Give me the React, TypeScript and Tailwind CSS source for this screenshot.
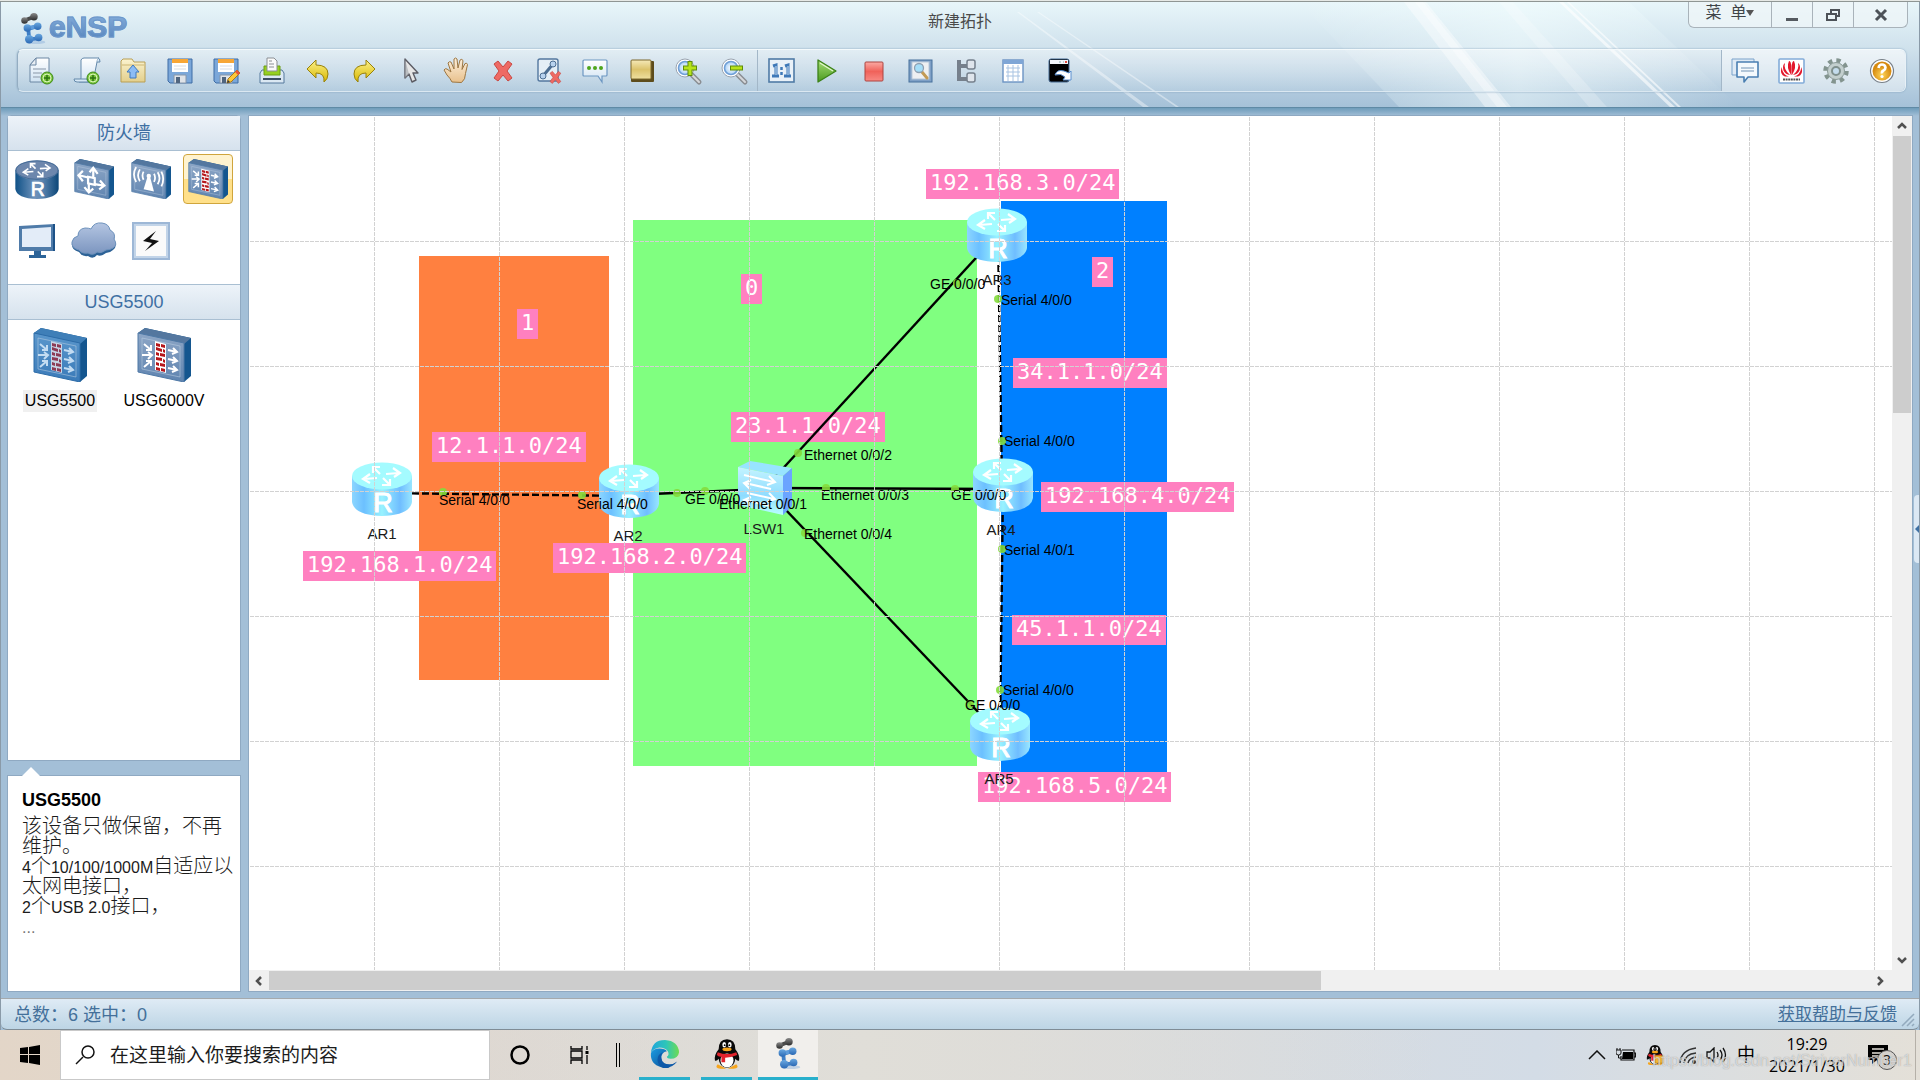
import React from "react";

type P = { className?: string };

const cx = (...c: (string | undefined | false)[]) => c.filter(Boolean).join(" ");

/* ---------- shared gradients ---------- */

function Defs() {
  return (
    <svg width="0" height="0" className="absolute" aria-hidden="true">
      <defs>
        <linearGradient id="steel" x1="0" y1="0" x2="0" y2="1">
          <stop offset="0" stopColor="#8da6c6" />
          <stop offset="1" stopColor="#5f84b0" />
        </linearGradient>
        <linearGradient id="steelSel" x1="0" y1="0" x2="0" y2="1">
          <stop offset="0" stopColor="#5b97cc" />
          <stop offset="1" stopColor="#3a7ab8" />
        </linearGradient>
        <linearGradient id="cylDark" x1="0" y1="0" x2="1" y2="0">
          <stop offset="0" stopColor="#0f5187" />
          <stop offset="0.45" stopColor="#6f93bb" />
          <stop offset="0.6" stopColor="#6189b3" />
          <stop offset="1" stopColor="#0b4678" />
        </linearGradient>
        <linearGradient id="cylLight" x1="0" y1="0" x2="1" y2="0">
          <stop offset="0" stopColor="#8cd6ff" />
          <stop offset="0.2" stopColor="#6cc0ff" />
          <stop offset="0.5" stopColor="#98f2ff" />
          <stop offset="0.8" stopColor="#6fbdff" />
          <stop offset="1" stopColor="#98e6ff" />
        </linearGradient>
        <linearGradient id="swLight" x1="0" y1="0" x2="0" y2="1">
          <stop offset="0" stopColor="#c4f4ff" />
          <stop offset="0.6" stopColor="#8fdcff" />
          <stop offset="1" stopColor="#b8ffff" />
        </linearGradient>
        <linearGradient id="cloudFill" x1="0" y1="0" x2="0" y2="1">
          <stop offset="0" stopColor="#b4c5e2" />
          <stop offset="1" stopColor="#7b95bf" />
        </linearGradient>
        <linearGradient id="gold" x1="0" y1="0" x2="0" y2="1">
          <stop offset="0" stopColor="#fbf08a" />
          <stop offset="1" stopColor="#d9b800" />
        </linearGradient>
        <linearGradient id="playG" x1="0" y1="0" x2="0" y2="1">
          <stop offset="0" stopColor="#a5dd75" />
          <stop offset="1" stopColor="#4a9a1e" />
        </linearGradient>
        <linearGradient id="stopG" x1="0" y1="0" x2="0" y2="1">
          <stop offset="0" stopColor="#fbaaa4" />
          <stop offset="0.5" stopColor="#f0625a" />
          <stop offset="1" stopColor="#f88a84" />
        </linearGradient>
        <linearGradient id="noteG" x1="0" y1="0" x2="0" y2="1">
          <stop offset="0" stopColor="#f5e9b8" />
          <stop offset="0.5" stopColor="#dcc36c" />
          <stop offset="1" stopColor="#efe0a0" />
        </linearGradient>
        <linearGradient id="folderG" x1="0" y1="0" x2="0" y2="1">
          <stop offset="0" stopColor="#fbf3cf" />
          <stop offset="1" stopColor="#e3cf8c" />
        </linearGradient>
        <linearGradient id="paperG" x1="0" y1="0" x2="0" y2="1">
          <stop offset="0" stopColor="#ffffff" />
          <stop offset="1" stopColor="#cfe2f2" />
        </linearGradient>
        <radialGradient id="lens">
          <stop offset="0" stopColor="#ffffff" />
          <stop offset="1" stopColor="#a9d0f5" />
        </radialGradient>
        <radialGradient id="helpG" cx="0.5" cy="0.7">
          <stop offset="0" stopColor="#ffd65a" />
          <stop offset="1" stopColor="#d68a10" />
        </radialGradient>
        <linearGradient id="handG" x1="0" y1="0" x2="0" y2="1">
          <stop offset="0" stopColor="#fdf0dc" />
          <stop offset="1" stopColor="#e8c08c" />
        </linearGradient>
        <linearGradient id="beadBlue" x1="0" y1="0" x2="0" y2="1">
          <stop offset="0" stopColor="#6aa8e0" />
          <stop offset="1" stopColor="#2a68b4" />
        </linearGradient>
        <linearGradient id="beadDark" x1="0" y1="0" x2="0" y2="1">
          <stop offset="0" stopColor="#8a8a8a" />
          <stop offset="1" stopColor="#2a2a2a" />
        </linearGradient>
        <linearGradient id="edgeTop" x1="0" y1="0" x2="1" y2="0">
          <stop offset="0" stopColor="#1fa5dc" />
          <stop offset="0.55" stopColor="#2ec6b8" />
          <stop offset="1" stopColor="#6fdb52" />
        </linearGradient>
        <linearGradient id="edgeBody" x1="0" y1="0" x2="1" y2="1">
          <stop offset="0" stopColor="#1b9de2" />
          <stop offset="1" stopColor="#0c4a94" />
        </linearGradient>
        <linearGradient id="glow" x1="0" y1="0" x2="1" y2="0">
          <stop offset="0" stopColor="#f4ffff" stopOpacity="0" />
          <stop offset="0.5" stopColor="#f4ffff" stopOpacity="0.5" />
          <stop offset="1" stopColor="#f4ffff" stopOpacity="0" />
        </linearGradient>
      </defs>
    </svg>
  );
}

const Icon = ({ children, className }: P & { children: React.ReactNode }) => (
  <svg viewBox="0 0 28 28" className={cx("size-7 overflow-visible", className)} aria-hidden="true">
    {children}
  </svg>
);

const PlusBadge = () => (
  <g>
    <circle cx="20" cy="21" r="6" fill="#7cc63c" stroke="#3d8a1a" />
    <circle cx="20" cy="21" r="4" fill="none" stroke="#d9f3bd" strokeWidth="1" />
    <path d="M20 18v6M17 21h6" stroke="#2d7410" strokeWidth="1.5" />
  </g>
);

/* ---------- toolbar icons ---------- */

const NewTopo = () => (
  <Icon>
    <path d="M9 1h13v24H3V8z" fill="url(#paperG)" stroke="#6b86a3" />
    <path d="M9 1v7H3z" fill="#e8eef4" stroke="#6b86a3" />
    <path d="M6 12h13M6 16h9M6 20h7" stroke="#a7b4c2" strokeWidth="1.6" />
    <PlusBadge />
  </Icon>
);
const NewPaper = () => (
  <Icon>
    <path d="M8 3q1-2 3-2h15q-2 1-2 4L20 25H6q2-1 2-4z" fill="url(#paperG)" stroke="#6489ab" />
    <path d="M24 5h3q0-4-2-4M1 22h13q0 3 2 3H4q-3 0-3-3z" fill="#d7e8f5" stroke="#6489ab" />
    <PlusBadge />
  </Icon>
);
const OpenIcon = () => (
  <Icon>
    <path d="M2 25V4l2-2h9l2 3h11v20z" fill="url(#folderG)" stroke="#b99f55" />
    <path d="M3 8h22" stroke="#cdb774" />
    <path d="M14 8l6 7h-3v6h-6v-6H8z" fill="#8cbcf5" stroke="#3e78bd" />
  </Icon>
);
const Floppy = () => (
  <>
    <path d="M2 2h24v24H4l-2-2z" fill="#7ba7d9" stroke="#3f6ca5" />
    <path d="M6 2h16v13H6z" fill="#fff" />
    <path d="M6 2h16v4H6z" fill="#f7a636" />
    <path d="M8 9h12M8 12h12" stroke="#d8dde4" />
    <path d="M8 18h12v8H8z" fill="#dfe3e8" stroke="#8696aa" />
    <path d="M10 20h4v6h-4z" fill="#50657f" />
  </>
);
const SaveIcon = () => (
  <Icon>
    <Floppy />
  </Icon>
);
const SaveAsIcon = () => (
  <Icon>
    <Floppy />
    <path d="M15 26l1-4 9-9 3 3-9 9z" fill="#fcc83a" stroke="#a8781c" />
    <path d="M23 15l2-2 3 3-2 2z" fill="#e7523c" />
    <path d="M15 26l1-3 2 2z" fill="#3a3a3a" />
  </Icon>
);
const PrintIcon = () => (
  <Icon>
    <path d="M4 13h20l2 3v10H2V16z" fill="#dbe8f3" stroke="#55789c" />
    <path d="M6 9h16v9H6z" fill="#96d01f" stroke="#6d9e12" />
    <path d="M9 1h7l3 3v10H9z" fill="#fafafa" stroke="#8b8f94" />
    <path d="M11 4h3M11 7h5M11 10h5" stroke="#8b8f94" />
    <path d="M5 21h18v2H5z" fill="#3c4e62" />
  </Icon>
);
const UndoIcon = () => (
  <Icon>
    <path d="M3 12L12 3v5q12 0 12 9 0 5-4 8 1-9-8-9v5z" fill="url(#gold)" stroke="#98820c" strokeLinejoin="round" />
  </Icon>
);
const RedoIcon = () => (
  <Icon>
    <path d="M25 12L16 3v5Q4 8 4 17q0 5 4 8-1-9 8-9v5z" fill="url(#gold)" stroke="#98820c" strokeLinejoin="round" />
  </Icon>
);
const CursorIcon = () => (
  <Icon>
    <path d="M8 2v19l4-4 3 8 4-2-3-7h5z" fill="#e6e6e6" stroke="#5c5c64" strokeWidth="1.4" strokeLinejoin="round" />
    <path d="M8 2v19l4-4z" fill="#9fa3a8" opacity=".6" />
  </Icon>
);
const HandIcon = () => (
  <Icon>
    <path
      d="M9 25q-2-4-5-7l-3-5q1-2 3-1l4 3-3-9q1-2 3-1l3 7V2q1.500-2 3 0l1 9 2-8q2-1.500 3 .5l-1 9 3-6q2-1 2.500 1l-2 9q0 6-4 9z"
      fill="url(#handG)"
      stroke="#9c7642"
      strokeLinejoin="round"
    />
  </Icon>
);
const CrossPath = () => (
  <path
    d="M5 7l4-3 5 6 5-6 4 3-5 7 5 7-4 3-5-6-5 6-4-3 5-7z"
    fill="#ee6a64"
    stroke="#c94842"
    strokeLinejoin="round"
  />
);
const DeleteIcon = () => (
  <Icon>
    <CrossPath />
  </Icon>
);
const DeleteLinkIcon = () => (
  <Icon>
    <rect x="3" y="2" width="20" height="22" rx="2" fill="#e4eef6" stroke="#53779f" strokeWidth="1.4" />
    <path d="M8 19L18 7" stroke="#4d6e92" strokeWidth="3" />
    <circle cx="18" cy="7" r="3" fill="#b8d2ee" stroke="#4d6e92" />
    <circle cx="8" cy="19" r="3" fill="#b8d2ee" stroke="#4d6e92" />
    <g transform="translate(12 12) scale(.6)">
      <CrossPath />
    </g>
  </Icon>
);
const TextIcon = () => (
  <Icon>
    <path d="M3 3h22q1 0 1 1v14q0 1-1 1h-4v6l-4-6H3q-1 0-1-1V4q0-1 1-1z" fill="url(#paperG)" stroke="#6d97c2" strokeWidth="1.2" />
    <circle cx="8" cy="11" r="2" fill="#4fa61c" />
    <circle cx="14" cy="11" r="2" fill="#4fa61c" />
    <circle cx="20" cy="11" r="2" fill="#4fa61c" />
  </Icon>
);
const NoteIcon = () => (
  <Icon>
    <rect x="3" y="4" width="23" height="21" rx="1" fill="#5d4c1c" />
    <rect x="3" y="3" width="20" height="19" rx="1" fill="url(#noteG)" stroke="#7c682c" />
  </Icon>
);
const Magnifier = () => (
  <>
    <path d="M17 17l8 8" stroke="#8b8e93" strokeWidth="5" strokeLinecap="round" />
    <path d="M17 17l8 8" stroke="#d6d8db" strokeWidth="2" strokeLinecap="round" />
    <circle cx="11" cy="11" r="9" fill="#fff" stroke="#9aa4b0" />
    <circle cx="11" cy="11" r="6.5" fill="url(#lens)" stroke="#6f9fd6" strokeWidth="1.6" />
  </>
);
const ZoomInIcon = () => (
  <Icon>
    <Magnifier />
    <path d="M16 4v15M9 11h14" stroke="#5e8c0a" strokeWidth="5" />
    <path d="M16 5v13M10 11h12" stroke="#b7e31a" strokeWidth="3" />
  </Icon>
);
const ZoomOutIcon = () => (
  <Icon>
    <Magnifier />
    <path d="M10 11h13" stroke="#5e8c0a" strokeWidth="5" />
    <path d="M11 11h11" stroke="#b7e31a" strokeWidth="3" />
  </Icon>
);
const RatioIcon = () => (
  <Icon>
    <rect x="2" y="2" width="25" height="23" fill="#e9f1f8" stroke="#4f7ba6" strokeWidth="1.6" />
    <path d="M6 9l3-1v10M5 19h7M18 9l3-1v10M17 19h7" stroke="#3f79b8" strokeWidth="3" fill="none" />
    <path d="M9 9v9M21 9v9" stroke="#cfe2f5" strokeWidth="1" />
    <path d="M14.500 10v3M14.500 15v3" stroke="#3f79b8" strokeWidth="2.500" />
  </Icon>
);
const PlayIcon = () => (
  <Icon>
    <path d="M5 3l18 11L5 25z" fill="url(#playG)" stroke="#3c8218" strokeWidth="1.3" strokeLinejoin="round" />
    <path d="M7 6l13 8" stroke="#e4f6cf" strokeWidth="1.2" />
  </Icon>
);
const StopIcon = () => (
  <Icon>
    <rect x="5" y="5" width="18" height="19" rx="1" fill="url(#stopG)" stroke="#ad4540" />
  </Icon>
);
const InspectIcon = () => (
  <Icon>
    <rect x="3" y="3" width="23" height="22" fill="#7fa0c6" stroke="#46709c" />
    <rect x="6" y="5" width="17" height="17" fill="#eef0f2" stroke="#b9c9da" />
    <path d="M16 15l5 6" stroke="#c29a55" strokeWidth="3" strokeLinecap="round" />
    <circle cx="13" cy="11" r="4.5" fill="#a5def8" stroke="#8fa0b2" strokeWidth="1.3" />
  </Icon>
);
const TreeIcon = () => (
  <Icon>
    <path d="M7 3v19h9M7 9h9" stroke="#76808c" strokeWidth="4" fill="none" />
    <rect x="15" y="3" width="8" height="9" rx="2" fill="#dfe5ec" stroke="#76808c" strokeWidth="1.5" />
    <rect x="15" y="16" width="8" height="9" rx="2" fill="#dfe5ec" stroke="#76808c" strokeWidth="1.5" />
  </Icon>
);
const TableIcon = () => (
  <Icon>
    <rect x="4" y="3" width="20" height="22" fill="#fff" stroke="#6b93c4" strokeWidth="1.4" />
    <path d="M4 3h20v4H4z" fill="#7fa6d6" />
    <path d="M7 11h14M7 15h14M7 19h14M9 8v16M14 8v16M19 8v16" stroke="#a8c3e2" strokeWidth="1" />
  </Icon>
);
const CliIcon = () => (
  <Icon>
    <rect x="4" y="2" width="20" height="23" rx="2" fill="#000" stroke="#456a94" />
    <path d="M5 3h18v4H5z" fill="#f4f7fb" />
    <path d="M14 5h2M18 5h1" stroke="#8aa" />
    <path d="M20 5h2" stroke="#e14b3c" strokeWidth="2" />
    <path d="M10 18q2-6 9-4l5 2 2-2v9h-8l2-3q-4-4-10-2z" fill="#fff" stroke="#5a8fd0" />
  </Icon>
);

const ForumIcon = () => (
  <Icon>
    <path d="M1 2h22v16H1z" fill="#dfeaf5" stroke="#7ba3cb" />
    <path d="M6 5h21v15H17l-4 5v-5H6z" fill="#f4f9fd" stroke="#4a7fb2" strokeWidth="1.6" strokeLinejoin="round" />
    <path d="M10 11h13M10 14h13" stroke="#7093b6" strokeWidth="1.2" />
  </Icon>
);
const HuaweiIcon = () => (
  <Icon>
    <rect x="2" y="2" width="25" height="24" rx="1" fill="#fff" stroke="#83acd9" strokeWidth="1.6" />
    <g fill="#e3172b">
      <path d="M14 18Q9 10 12 4q3-1 2.300 14z" />
      <path d="M15 18q5-8 2-14-3-1-2.300 14z" />
      <path d="M13 18Q6 12 8 6q-3 2-1.500 7.500 2 4 6.500 4.500z" />
      <path d="M16 18q7-6 5-12 3 2 1.500 7.500-2 4-6.500 4.500z" />
      <path d="M12 19.500q-6-1-7.500-9.500-2 8 3.500 9.500z" />
      <path d="M17 19.500q6-1 7.500-9.500 2 8-3.500 9.500z" />
    </g>
    <path d="M6 22.500h17" stroke="#555" strokeWidth="2" strokeDasharray="2 .6" />
  </Icon>
);
const GearIcon = () => (
  <Icon>
    <circle cx="14" cy="14" r="10.5" fill="none" stroke="#83948f" strokeWidth="4.5" strokeDasharray="4.2 4.05" />
    <circle cx="14" cy="14" r="8.5" fill="#c3cfce" stroke="#8b9b98" />
    <circle cx="14" cy="14" r="4" fill="#c4dcec" stroke="#7f908d" strokeWidth="2" />
  </Icon>
);
const HelpIcon = () => (
  <Icon>
    <circle cx="14" cy="14" r="11.5" fill="#fff" stroke="#777f88" strokeWidth="1.2" />
    <circle cx="14" cy="14" r="9.5" fill="url(#helpG)" />
    <path d="M10.500 11q.5-3.500 3.500-3.500t3.500 3q0 2-2 3t-1.500 3" stroke="#fff" strokeWidth="2.600" fill="none" />
    <circle cx="14" cy="19.500" r="1.600" fill="#fff" />
  </Icon>
);

/* ---------- brand mark ---------- */

const EnspMark = ({ className }: P) => (
  <svg viewBox="0 0 26 34" className={className} aria-hidden="true">
    <ellipse cx="16" cy="31" rx="10" ry="2" fill="#8fb4dc" opacity=".5" />
    <path d="M4 8L14 4" stroke="#4a4a4a" strokeWidth="4" />
    <circle cx="4" cy="8" r="3.500" fill="url(#beadDark)" />
    <circle cx="14" cy="4" r="4" fill="url(#beadDark)" />
    <path d="M18 14L8 17l1 11 9-1" stroke="#3f7fc6" strokeWidth="4" fill="none" />
    <path d="M18 14L7 16" stroke="#5d9bdb" strokeWidth="4" />
    <circle cx="18" cy="14" r="4" fill="url(#beadBlue)" />
    <circle cx="7" cy="16" r="4" fill="url(#beadBlue)" />
    <circle cx="9" cy="28" r="4.500" fill="url(#beadBlue)" />
    <circle cx="19" cy="26" r="4" fill="url(#beadBlue)" />
  </svg>
);

/* ---------- device icons ---------- */

const RouterArrows = () => (
  <g stroke="#fff" strokeWidth="2.200" fill="none" strokeLinejoin="miter">
    <path d="M28 12l-6-6M21 11V5h7" />
    <path d="M34 12l13-1M41 6l7 5-6 4" />
    <path d="M25 16l-13 1M18 12l-7 5 7 4" />
    <path d="M31 16l6 6M30 23h8v-6" />
  </g>
);

function Router({ dark, className }: P & { dark?: boolean }) {
  return (
    <svg viewBox="0 0 60 54" className={cx("overflow-visible", className)} aria-hidden="true">
      <path d="M0 14v26q2 13 30 14 28-1 30-14V14z" fill={dark ? "url(#cylDark)" : "url(#cylLight)"} />
      <ellipse cx="30" cy="14" rx="30" ry="13.500" fill={dark ? "#6d87ad" : "#a4fbff"} />
      {dark && <ellipse cx="30" cy="14" rx="29" ry="12.800" fill="none" stroke="#35628f" />}
      <RouterArrows />
      <text x="31" y="50" textAnchor="middle" fontFamily="Liberation Sans, sans-serif" fontSize="27" fill="#fff" stroke="#fff">
        R
      </text>
    </svg>
  );
}

function Box({ selected, children, className }: P & { selected?: boolean; children: React.ReactNode }) {
  return (
    <svg viewBox="0 0 54 54" className={className} aria-hidden="true">
      <path d="M1 5l7-5 46 10v38l-7 6z" fill="#14568f" />
      <path d="M1 5l7-5 46 10-7 6z" fill={selected ? "#3f7fb8" : "#54779f"} />
      <path d="M1 5l46 10v39L1 44z" fill={selected ? "url(#steelSel)" : "url(#steel)"} stroke={selected ? "#2d6ca8" : "#4f79a6"} />
      <path d="M5 10l38 8v31L5 41z" fill="none" stroke="#c2d3e6" strokeOpacity=".5" />
      {children}
    </svg>
  );
}

const FirewallArt = ({ dim }: { dim?: boolean }) => (
  <>
    <g stroke={dim ? "#c3dcf2" : "#fff"} strokeWidth="2" fill="none">
      <path d="M7 16l7 6M14 17v5H9" />
      <path d="M5 27h10M11 24l4 3-4 4" />
      <path d="M7 39l7-6M9 33h5v5" />
      <path d="M31 22l9 2M36 20l4 4-5 2" />
      <path d="M31 31l9 2M36 29l4 4-5 2" />
      <path d="M31 40l9 2M36 38l4 4-5 2" />
    </g>
    <path d="M18 13l11 3v29l-11-3z" fill={dim ? "#c7d5e6" : "#fff"} />
    <g fill={dim ? "#8c3a55" : "#b5161b"}>
      <path d="M19 15l4 1v3l-4-1zM24 16l4 1v3l-4-1zM19 19l6 2v3l-6-2zM26 21l2 1v3l-2-1zM19 24l3 1v3l-3-1zM23 25l5 1v3l-5-1zM19 29l6 1v3l-6-1zM26 31l2 1v3l-2-1zM19 34l3 1v3l-3-1zM23 35l5 1v3l-5-1zM19 39l4 1v3l-4-1zM24 40l4 1v3l-4-1z" />
    </g>
  </>
);

const SwitchCat = ({ className }: P) => (
  <Box className={className}>
    <g stroke="#fff" strokeWidth="3" fill="none">
      <path d="M19 24l9 2v9l-9-2z" />
      <path d="M26 26V13M21 18l5-6 6 8" />
      <path d="M28 34l12 2M35 29l6 7-7 5" />
      <path d="M20 33v11M14 38l6 7 6-5" />
      <path d="M19 25L7 22M12 16l-6 6 6 8" />
    </g>
  </Box>
);
const WlanCat = ({ className }: P) => (
  <Box className={className}>
    <path d="M22 25h4l5 19-14-3z" fill="#fff" />
    <circle cx="24" cy="23" r="3" fill="#fff" />
    <g stroke="#fff" strokeWidth="2.400" fill="none">
      <path d="M17 17q-3 5 0 11M12 14q-5 8 0 16M7 11q-6 10 0 20M31 20q3 5 0 11M36 18q5 8 0 16M41 17q5 10 0 20" />
    </g>
  </Box>
);
const FirewallCat = ({ className, selected, dim }: P & { selected?: boolean; dim?: boolean }) => (
  <Box className={className} selected={selected}>
    <FirewallArt dim={dim} />
  </Box>
);
const PcCat = ({ className }: P) => (
  <svg viewBox="0 0 36 36" className={className} aria-hidden="true">
    <path d="M0 3l36-2v27H0z" fill="#4f7ba9" />
    <path d="M34 1h2v27h-2z" fill="#1d5288" />
    <path d="M3 6l29-2v20H3z" fill="#e3ecf8" />
    <path d="M15 28h7v4h5v3H10v-3h5z" fill="#2c6499" />
  </svg>
);
const CloudCat = ({ className }: P) => (
  <svg viewBox="0 0 46 38" className={className} aria-hidden="true">
    <path
      d="M8 30q-8-2-7-9 1-5 6-6 0-7 7-8 4 0 6 1 3-7 11-6 7 1 8 7 6 3 4 9 4 6-1 10-3 3-7 3-5 4-9 2-4 5-9 1-6 1-9-4z"
      fill="#2d6296"
    />
    <path
      d="M8 28q-8-2-7-8 1-5 6-6 0-7 7-8 4 0 6 1 3-7 11-6 7 1 8 7 6 3 4 9 4 6-1 9-3 2-7 2-5 4-9 2-4 4-9 1-6 1-9-3z"
      fill="url(#cloudFill)"
      stroke="#6f93bd"
    />
  </svg>
);
const CustomCat = ({ className }: P) => (
  <svg viewBox="0 0 38 38" className={className} aria-hidden="true">
    <rect width="38" height="38" fill="#9db7d6" />
    <rect x="2" y="2" width="34" height="34" fill="#c2d4e8" />
    <rect x="4" y="4" width="30" height="30" fill="#fafafa" />
    <path d="M24 9L11 19l9 2-7 8 14-10-9-2z" fill="#111" />
  </svg>
);

const SwitchDevice = ({ className }: P) => (
  <svg viewBox="0 0 54 54" className={className} aria-hidden="true">
    <path d="M0 6l12-6 42 7-9 8z" fill="#98e4ff" />
    <path d="M45 15l9-8v38l-9 9z" fill="#6ba4ff" />
    <path d="M0 6l45 9v39L0 44z" fill="url(#swLight)" />
    <g stroke="#fff" strokeWidth="2" fill="none">
      <path d="M6 14l30 7M31 15l6 6-8 3" />
      <path d="M7 22l26 6M13 19l-7 3 6 6" />
      <path d="M9 32l27 6M31 32l6 6-8 3" />
      <path d="M7 39l26 6M13 36l-7 3 6 6" />
    </g>
  </svg>
);

/* ---------- taskbar icons ---------- */

const Penguin = ({ className, mail }: P & { mail?: boolean }) => (
  <svg viewBox="0 0 28 32" className={className} aria-hidden="true">
    <path d="M4 27q-4 4 3 5h6zM24 27q4 4-3 5h-6z" fill="#f7a51c" />
    <path d="M14 0q9 0 9 11 5 6 4 12-2 1-4-2-1 9-9 10-8-1-9-10-2 3-4 2-1-6 4-12Q5 0 14 0z" fill="#0a0a0a" />
    <ellipse cx="14" cy="23" rx="7" ry="7.500" fill="#fff" />
    <ellipse cx="11" cy="6" rx="2" ry="3" fill="#fff" />
    <ellipse cx="17" cy="6" rx="2" ry="3" fill="#fff" />
    <circle cx="11.500" cy="6.500" r="1" />
    <circle cx="16.500" cy="6.500" r="1" />
    <ellipse cx="14" cy="11" rx="5" ry="2" fill="#f7a51c" />
    <path d="M4 14q10 4 20 0l1 3q-7 3-13 3v5H8v-6q-3 0-5-2z" fill="#e0222c" />
    {mail && <path d="M14 17h13v12H14z" fill="#f2b632" stroke="#b47c10" />}
  </svg>
);
const EdgeIcon = ({ className }: P) => (
  <svg viewBox="0 0 32 32" className={className} aria-hidden="true">
    <path d="M1 15Q2 1 16 1q14 1 15 13-1 7-9 7-4 0-4-2 3-2 1-6-3-4-9-4-7 1-9 6z" fill="url(#edgeTop)" />
    <path d="M1 15q2-5 9-5 6 0 8 3-6 1-6 8 1 9 9 9-5 2-9 0Q0 27 1 15z" fill="url(#edgeBody)" />
    <path d="M12 20q1 7 9 7 4 0 8-3-5 7-14 7-7-3-7-9 0-6 6-8-3 3-2 6z" fill="#0e59a8" />
  </svg>
);

/* ---------- header ---------- */

const editTools: [string, React.ReactNode][] = [
  ["新建拓扑", <NewTopo />],
  ["新建试卷工程", <NewPaper />],
  ["打开", <OpenIcon />],
  ["保存", <SaveIcon />],
  ["另存为", <SaveAsIcon />],
  ["打印", <PrintIcon />],
  ["撤销", <UndoIcon />],
  ["恢复", <RedoIcon />],
  ["选择", <CursorIcon />],
  ["拖动", <HandIcon />],
  ["删除", <DeleteIcon />],
  ["删除连线", <DeleteLinkIcon />],
  ["文本", <TextIcon />],
  ["调色板", <NoteIcon />],
  ["放大", <ZoomInIcon />],
  ["缩小", <ZoomOutIcon />],
];
const runTools: [string, React.ReactNode][] = [
  ["原始大小", <RatioIcon />],
  ["启动设备", <PlayIcon />],
  ["停止设备", <StopIcon />],
  ["采集数据报文", <InspectIcon />],
  ["显示所有接口", <TreeIcon />],
  ["显示网格", <TableIcon />],
  ["打开命令行", <CliIcon />],
];
const sideTools: [string, React.ReactNode][] = [
  ["论坛", <ForumIcon />],
  ["官网", <HuaweiIcon />],
  ["设置", <GearIcon />],
  ["帮助", <HelpIcon />],
];

const ToolGroup = ({ tools, className }: P & { tools: [string, React.ReactNode][] }) => (
  <div className={cx("flex items-center", className)}>
    {tools.map(([label, icon]) => (
      <button key={label} type="button" aria-label={label} className="flex h-full flex-1 items-center justify-center">
        {icon}
      </button>
    ))}
  </div>
);

function Header() {
  return (
    <header className="relative flex h-[106px] shrink-0 flex-col border-b border-[#5f8aa5] bg-linear-to-b from-[#e8f6fa] via-[#cfe1ec] via-45% to-[#a5c1d8]">
      <svg viewBox="0 0 920 106" preserveAspectRatio="none" className="absolute top-0 right-0 h-full w-[920px]" aria-hidden="true">
        <path d="M300 0h330l110 106H400z" fill="url(#glow)" />
        <path d="M405 0h22l85 106h-26z" fill="#fff" opacity=".4" />
        <path d="M416 0h8l84 106h-10z" fill="#fff" opacity=".35" />
        <path d="M500 0h14l94 106h-18z" fill="#fff" opacity=".22" />
        <path d="M560 0h4l112 106h-5zM568 0h2l112 106h-3z" fill="#fff" opacity=".6" />
        <path d="M20 10l130 96h-6L18 10zM40 10l140 96h-3L38 10z" fill="#fff" opacity=".4" />
      </svg>
      <div className="relative grid h-[47px] grid-cols-[1fr_auto_1fr] items-start">
        <div className="flex items-center gap-[2px] pt-[7px] pl-[18px]">
          <EnspMark className="mt-1 h-8 w-7" />
          <h1 className="bg-linear-to-b from-[#8db4e0] to-[#4f7fb8] bg-clip-text text-[30px] leading-9 font-bold text-transparent [-webkit-text-stroke:1px_#6c97cb]">
            eNSP
          </h1>
        </div>
        <div className="pt-2 text-base leading-6 text-[#4a4a4a]">新建拓扑</div>
        <div className="mr-[11px] flex h-[26px] items-stretch justify-self-end rounded-b-md border border-t-0 border-[#a9b3ba] bg-[#edf5f8]/80 text-[#3f4448]">
          <button type="button" className="flex w-[83px] items-center justify-center border-r border-[#a9b3ba] pb-1 text-base leading-none">
            菜&nbsp; 单
            <svg viewBox="0 0 8 6" className="h-[6px] w-2" aria-hidden="true">
              <path d="M0 0h8L4 6z" fill="#555" />
            </svg>
          </button>
          <button type="button" aria-label="最小化" className="flex w-[41px] items-center justify-center border-r border-[#a9b3ba]">
            <svg viewBox="0 0 14 14" className="size-[14px]" aria-hidden="true">
              <path d="M1 10h12v3H1z" fill="#555a60" />
            </svg>
          </button>
          <button type="button" aria-label="还原" className="flex w-[41px] items-center justify-center border-r border-[#a9b3ba]">
            <svg viewBox="0 0 14 14" className="size-[14px]" aria-hidden="true">
              <path d="M5 5V2h8v6h-3M1 6h9v6H1z" fill="none" stroke="#4d5258" strokeWidth="2" />
            </svg>
          </button>
          <button type="button" aria-label="关闭" className="flex w-[53px] items-center justify-center">
            <svg viewBox="0 0 14 14" className="size-[14px]" aria-hidden="true">
              <path d="M2 2l10 10M12 2L2 12" stroke="#4d5258" strokeWidth="3" />
            </svg>
          </button>
        </div>
      </div>
      <div className="relative mr-[13px] ml-4 flex h-[43px] rounded-md border border-t-[#f4fafc] border-r-[#e8f1f7] border-b-[#dbe8f1] border-l-[#94adc2] bg-linear-to-b from-white/40 to-white/5 shadow-[0_0_2px_#7d9db8]">
        <ToolGroup tools={editTools} className="w-[739px]" />
        <ToolGroup tools={runTools} className="w-[325px] border-l border-[#a3b7c8]" />
        <ToolGroup tools={sideTools} className="ml-auto w-[184px] rounded-r-md border-l border-[#a3b7c8] bg-white/40" />
      </div>
    </header>
  );
}

/* ---------- sidebar ---------- */

const PanelTitle = ({ children }: { children: React.ReactNode }) => (
  <h2 className="flex h-[35px] items-center justify-center border-b border-[#a9bfd2] bg-linear-to-b from-[#edf3f9] to-[#d6e2ed] text-lg leading-none text-[#3f70a3]">
    {children}
  </h2>
);

const categories: [string, React.ReactNode][] = [
  ["路由器", <Router dark className="h-[39px] w-11" />],
  ["交换机", <SwitchCat className="size-10" />],
  ["无线局域网", <WlanCat className="size-10" />],
  ["防火墙", <FirewallCat className="size-10" />],
  ["终端", <PcCat className="size-9" />],
  ["其他设备", <CloudCat className="h-[38px] w-[46px]" />],
  ["设备连线", <CustomCat className="size-[38px]" />],
];

function Sidebar() {
  return (
    <aside className="flex w-[234px] shrink-0 flex-col">
      <div className="flex-1 rounded-t border border-[#8fa9c2] bg-white">
        <PanelTitle>防火墙</PanelTitle>
        <div className="grid h-[133px] grid-cols-4 content-start gap-y-3 pt-[3px] pr-1">
          {categories.map(([label, icon], i) => (
            <button
              key={label}
              type="button"
              aria-label={label}
              className={cx(
                "m-auto flex size-[50px] items-center justify-center rounded border",
                i === 3 ? "border-[#d0a53c] bg-linear-to-b from-[#fff3cf] from-50% to-[#ffe08a] to-50%" : "border-transparent",
              )}
            >
              {icon}
            </button>
          ))}
        </div>
        <div className="border-t border-[#a9bfd2]">
          <PanelTitle>USG5500</PanelTitle>
        </div>
        <div className="flex pt-2">
          <button type="button" className="flex w-[104px] flex-col items-center gap-2">
            <FirewallCat selected dim className="size-[54px]" />
            <span className="bg-[#f0f0f0] px-[2px] text-base leading-[22px] text-black">USG5500</span>
          </button>
          <button type="button" className="flex w-[104px] flex-col items-center gap-2">
            <FirewallCat className="size-[54px]" />
            <span className="text-base leading-[22px] text-black">USG6000V</span>
          </button>
        </div>
      </div>
      <svg viewBox="0 0 18 10" className="z-10 mt-[5px] -mb-px ml-[15px] h-[10px] w-[18px] shrink-0" aria-hidden="true">
        <path d="M0 10l9-9 9 9z" fill="#fff" />
      </svg>
      <section className="h-[217px] border border-[#8fa9c2] bg-white pt-3 pl-[14px] text-black">
        <h3 className="text-lg leading-6 font-bold">USG5500</h3>
        <p className="mt-1 text-xl leading-5 font-light whitespace-nowrap text-[#1c1c1c]">
          该设备只做保留，不再
          <br />
          维护。
          <br />
          <span className="text-base leading-none">4</span>个<span className="text-base leading-none">10/100/1000M</span>自适应以
          <br />
          太网电接口，
          <br />
          <span className="text-base leading-none">2</span>个<span className="text-base leading-none">USB 2.0</span>接口，
        </p>
        <p className="text-base leading-6 text-[#777]">...</p>
      </section>
    </aside>
  );
}

/* ---------- topology canvas ---------- */

const zones = [
  { x: 170, y: 140, w: 190, h: 424, color: "bg-[#ff8040]" },
  { x: 384, y: 104, w: 344, h: 546, color: "bg-[#80ff80]" },
  { x: 752, y: 85, w: 166, h: 571, color: "bg-[#0080ff]" },
];

const notes = [
  { x: 268, y: 193, t: "1" },
  { x: 492, y: 158, t: "0" },
  { x: 843, y: 141, t: "2" },
  { x: 183, y: 316, t: "12.1.1.0/24" },
  { x: 482, y: 296, t: "23.1.1.0/24" },
  { x: 764, y: 242, t: "34.1.1.0/24" },
  { x: 763, y: 499, t: "45.1.1.0/24" },
  { x: 54, y: 435, t: "192.168.1.0/24" },
  { x: 304, y: 427, t: "192.168.2.0/24" },
  { x: 677, y: 53, t: "192.168.3.0/24" },
  { x: 792, y: 366, t: "192.168.4.0/24" },
  { x: 729, y: 656, t: "192.168.5.0/24" },
];

const links: { p: [number, number, number, number]; dashed?: boolean }[] = [
  { p: [133, 377, 380, 380], dashed: true },
  { p: [380, 379, 516, 373] },
  { p: [516, 372, 753, 373] },
  { p: [516, 372, 748, 119] },
  { p: [516, 372, 751, 619] },
  { p: [749, 119, 753, 369], dashed: true },
  { p: [754, 369, 751, 619], dashed: true },
];

const dots: [number, number][] = [
  [194, 376], [333, 379], [428, 377], [456, 375], [549, 337], [577, 372], [706, 373],
  [556, 417], [749, 183], [753, 325], [753, 433], [751, 574], [721, 588], [708, 167],
];

const devices = [
  { name: "AR1", x: 103, y: 346, lx: 133, ly: 418 },
  { name: "AR2", x: 350, y: 348, lx: 379, ly: 420 },
  { name: "AR3", x: 718, y: 92, lx: 748, ly: 164 },
  { name: "AR4", x: 724, y: 342, lx: 752, ly: 414 },
  { name: "AR5", x: 721, y: 591, lx: 750, ly: 663 },
  { name: "LSW1", x: 489, y: 345, lx: 515, ly: 413 },
];

const ports = [
  { x: 190, y: 384, t: "Serial 4/0/0" },
  { x: 328, y: 388, t: "Serial 4/0/0" },
  { x: 436, y: 383, t: "GE 0/0/0" },
  { x: 470, y: 388, t: "Ethernet 0/0/1" },
  { x: 555, y: 339, t: "Ethernet 0/0/2" },
  { x: 572, y: 379, t: "Ethernet 0/0/3" },
  { x: 555, y: 418, t: "Ethernet 0/0/4" },
  { x: 702, y: 379, t: "GE 0/0/0" },
  { x: 755, y: 325, t: "Serial 4/0/0" },
  { x: 755, y: 434, t: "Serial 4/0/1" },
  { x: 752, y: 184, t: "Serial 4/0/0" },
  { x: 681, y: 168, t: "GE 0/0/0" },
  { x: 716, y: 589, t: "GE 0/0/0" },
  { x: 754, y: 574, t: "Serial 4/0/0" },
];

function Topology() {
  return (
    <div className="relative min-w-0 flex-1 overflow-hidden bg-white">
      {zones.map((z) => (
        <div key={z.color} className={cx("absolute", z.color)} style={{ left: z.x, top: z.y, width: z.w, height: z.h }} />
      ))}
      {notes.map((n) => (
        <div
          key={n.t}
          className="absolute bg-[#ff80c0] pr-1 pb-[2px] pl-1 font-['DejaVu_Sans_Mono','Liberation_Mono',monospace] text-[22px] leading-7 whitespace-nowrap text-white"
          style={{ left: n.x, top: n.y }}
        >
          {n.t}
        </div>
      ))}
      <svg className="absolute inset-0 h-full w-full" aria-hidden="true">
        {links.map(({ p, dashed }) => (
          <line
            key={p.join()}
            x1={p[0]}
            y1={p[1]}
            x2={p[2]}
            y2={p[3]}
            stroke="#000"
            strokeWidth="2.400"
            strokeDasharray={dashed ? "7 3" : undefined}
          />
        ))}
        {dots.map(([x, y]) => (
          <circle key={`${x}-${y}`} cx={x} cy={y} r="4" fill="#84dc3c" opacity=".9" />
        ))}
      </svg>
      {devices.map((d) => (
        <div key={d.name} className="absolute" style={{ left: d.x, top: d.y }}>
          {d.name === "LSW1" ? <SwitchDevice className="size-[54px]" /> : <Router className="h-[54px] w-[60px]" />}
        </div>
      ))}
      {devices.map((d) => (
        <div
          key={d.name}
          className="absolute -translate-x-1/2 -translate-y-1/2 text-[15px] leading-5 whitespace-nowrap text-[#1a1a1a]"
          style={{ left: d.lx, top: d.ly }}
        >
          {d.name}
        </div>
      ))}
      {ports.map((p) => (
        <div
          key={`${p.x}-${p.y}`}
          className="absolute -translate-y-1/2 text-sm leading-4 whitespace-nowrap text-black"
          style={{ left: p.x, top: p.y }}
        >
          {p.t}
        </div>
      ))}
      <svg className="pointer-events-none absolute inset-0 h-full w-full" aria-hidden="true">
        <defs>
          <pattern id="grid" x="1" y="1" width="125" height="125" patternUnits="userSpaceOnUse">
            <path d="M124.500 0v125M0 124.500h125" stroke="#d2d2d2" strokeDasharray="4 1" />
          </pattern>
        </defs>
        <rect x="1" y="1" width="100%" height="100%" fill="url(#grid)" />
      </svg>
    </div>
  );
}

const arrowPaths = {
  up: "M2 8l4-4 4 4",
  down: "M2 4l4 4 4-4",
  left: "M8 2L4 6l4 4",
  right: "M4 2l4 4-4 4",
};
const ScrollArrow = ({ dir, label }: { dir: keyof typeof arrowPaths; label: string }) => (
  <button type="button" aria-label={label} className="flex size-5 shrink-0 items-center justify-center">
    <svg viewBox="0 0 12 12" className="size-3" aria-hidden="true">
      <path d={arrowPaths[dir]} fill="none" stroke="#505050" strokeWidth="2.500" />
    </svg>
  </button>
);

function Workspace() {
  return (
    <main className="flex min-w-0 flex-1 flex-col border border-[#8fa9c2] bg-[#f0f0f0]">
      <div className="flex min-h-0 flex-1">
        <Topology />
        <div className="flex w-5 flex-col">
          <ScrollArrow dir="up" label="向上滚动" />
          <div className="flex-1 px-px">
            <div className="h-[34%] bg-[#cdcdcd]" />
          </div>
          <ScrollArrow dir="down" label="向下滚动" />
        </div>
      </div>
      <div className="flex h-[21px] items-center pr-[22px]">
        <ScrollArrow dir="left" label="向左滚动" />
        <div className="flex h-full flex-1 py-px">
          <div className="flex-23 bg-[#cdcdcd]" />
          <div className="flex-12" />
        </div>
        <ScrollArrow dir="right" label="向右滚动" />
      </div>
    </main>
  );
}

/* ---------- status bar and taskbar ---------- */

function StatusBar() {
  return (
    <footer className="flex h-8 shrink-0 items-center justify-between rounded-b-md border-t border-b border-t-[#a5a9ac] border-b-[#7f8c96] bg-linear-to-b from-[#dfebf5] to-[#bdd5e5] pt-[2px] pr-1 pl-[13px] text-[#44709a]">
      <span className="text-lg leading-none">总数：6 选中：0</span>
      <div className="flex items-end gap-1">
        <a href="#help" className="text-[17px] leading-6 underline">
          获取帮助与反馈
        </a>
        <svg viewBox="0 0 14 14" className="size-[14px]" aria-hidden="true">
          <path d="M1 13L13 1M6 13l7-7M11 13l2-2" stroke="#93aabd" strokeWidth="1.500" />
        </svg>
      </div>
    </footer>
  );
}

const TaskApp = ({ label, children, className, active }: P & { label: string; children: React.ReactNode; active?: boolean }) => (
  <button
    type="button"
    aria-label={label}
    className={cx("flex h-full items-center justify-center border-b-3 border-[#29b0cc]", active && "bg-[#f1efec]", className)}
  >
    {children}
  </button>
);

function Taskbar() {
  return (
    <nav className="relative flex h-[50px] shrink-0 items-center bg-linear-to-r from-[#e3d6c8] via-[#d3dce6] via-80% to-[#e4e0d8] text-black">
      <div className="absolute inset-0 bg-linear-to-r from-transparent from-24% via-[#e0ded8] via-45% to-transparent to-75%" />
      <button type="button" aria-label="开始" className="relative flex h-full w-[60px] items-center justify-center">
        <svg viewBox="0 0 20 20" className="size-5" aria-hidden="true">
          <path d="M0 3l8-1v7H0zM9 2l11-2v9H9zM0 10h8v8l-8-1zM9 10h11v10L9 18z" />
        </svg>
      </button>
      <label className="relative flex h-full w-[430px] items-center border border-[#c9c9c9] bg-white pl-[14px]">
        <svg viewBox="0 0 20 20" className="size-5" aria-hidden="true">
          <path d="M1 19l7-7" stroke="#111" strokeWidth="1.500" />
          <circle cx="13" cy="7" r="6" fill="none" stroke="#111" strokeWidth="1.500" />
        </svg>
        <input
          type="text"
          aria-label="搜索"
          placeholder="在这里输入你要搜索的内容"
          className="mt-[2px] ml-[15px] min-w-0 flex-1 bg-transparent text-[19px] leading-6 outline-none placeholder:text-[#1c1c1c]"
        />
      </label>
      <button type="button" aria-label="Cortana" className="relative flex h-full w-15 items-center justify-center">
        <svg viewBox="0 0 20 20" className="size-5" aria-hidden="true">
          <circle cx="10" cy="10" r="8.500" fill="none" stroke="#000" strokeWidth="2.500" />
        </svg>
      </button>
      <button type="button" aria-label="任务视图" className="relative flex h-full w-15 items-center justify-center">
        <svg viewBox="0 0 22 20" className="h-5 w-[22px]" aria-hidden="true">
          <path d="M2 1v3h11V1M2 6h11v7H2zM2 19v-4h11v4M18 1v4M18 10v9" fill="none" stroke="#000" strokeWidth="1.300" />
          <path d="M16.500 6h3v3h-3z" />
        </svg>
      </button>
      <div className="relative mx-[6px] flex h-6 w-1 border-x border-black" />
      <div className="relative flex h-full pl-[13px]">
        <TaskApp label="Edge" className="mr-[11px] w-[51px]">
          <EdgeIcon className="size-[30px]" />
        </TaskApp>
        <TaskApp label="QQ" className="mr-[6px] w-[51px]">
          <Penguin className="h-[30px] w-[26px]" />
        </TaskApp>
        <TaskApp label="eNSP" active className="w-[60px]">
          <EnspMark className="h-8 w-[26px]" />
        </TaskApp>
      </div>
      <div className="relative ml-auto flex h-full items-center">
        <button type="button" aria-label="显示隐藏的图标" className="flex w-[30px] justify-center">
          <svg viewBox="0 0 18 10" className="h-[10px] w-[18px]" aria-hidden="true">
            <path d="M1 9l8-8 8 8" fill="none" stroke="#111" strokeWidth="1.500" />
          </svg>
        </button>
        <svg viewBox="0 0 20 14" className="mx-1 h-[14px] w-5" aria-hidden="true">
          <path d="M6 2h12v10H5V8M18 5h1.500v4H18" fill="none" stroke="#111" strokeWidth="1.200" />
          <path d="M7 4h10v7H6z" />
          <path d="M0 2h5v3q0 2-2.500 2T0 5zM2.500 7v3H5M1 0v2M4 0v2" fill="none" stroke="#111" strokeWidth="1" />
        </svg>
        <Penguin mail className="mx-[5px] h-5 w-5" />
        <svg viewBox="0 0 20 20" className="mr-1 ml-2 size-5" aria-hidden="true">
          <g fill="none" stroke="#333" strokeWidth="1.400">
            <path d="M2 18Q3 5 18 3M6 18q1-9 12-10M10 18q1-5 8-6" />
          </g>
          <circle cx="16" cy="17" r="2" fill="#333" />
        </svg>
        <svg viewBox="0 0 22 16" className="mx-1 h-4 w-[22px]" aria-hidden="true">
          <path d="M1 5h3l4-4v14l-4-4H1zM11 5q2 3 0 6M14 3q4 5 0 10M17 1q5 7 0 14" fill="none" stroke="#111" strokeWidth="1.300" />
        </svg>
        <button type="button" className="flex w-[28px] justify-center text-lg leading-none">
          中
        </button>
        <time className="flex w-[94px] flex-col items-center font-['Open_Sans','Noto_Sans',sans-serif] text-base leading-[22px]">
          <span>19:29</span>
          <span>2021/1/30</span>
        </time>
        <button type="button" aria-label="3 条新通知" className="relative mr-[5px] flex w-[56px] justify-center">
          <svg viewBox="0 0 30 30" className="size-[30px] overflow-visible" aria-hidden="true">
            <path d="M1 5h20v15H10l-5 4v-4H1z" />
            <path d="M5 9h12M5 13h12M5 16h8" stroke="#e4e0d8" strokeWidth="1.400" />
            <circle cx="20" cy="20" r="9.500" fill="#d4d2ce" stroke="#555" />
            <text x="20" y="25" textAnchor="middle" fontFamily="Open Sans, sans-serif" fontSize="14" fill="#111">
              3
            </text>
          </svg>
        </button>
        <div className="h-full w-[5px] border-l border-[#b5b0a8]" />
      </div>
      <span className="pointer-events-none absolute right-2 bottom-[9px] text-base leading-5 text-white/60 [text-shadow:0_0_1px_rgba(90,90,90,0.6)]">
        https://blog.csdn.net/StriverNumber1
      </span>
    </nav>
  );
}

export default function App() {
  return (
    <div className="flex h-screen flex-col overflow-hidden bg-[#a3bfd7] font-['Liberation_Sans','Noto_Sans_CJK_SC',sans-serif]">
      <Defs />
      <div className="h-[2px] shrink-0 border-b border-[#8f9694] bg-[#e6e9e6]" />
      <div className="flex min-h-0 flex-1 flex-col border-x border-[#8a9aa8]">
        <Header />
        <div className="relative flex min-h-0 flex-1 gap-[7px] bg-linear-to-b from-[#6e9cba] via-[#a3bfd7] via-[8px] to-[#a3bfd7] pt-[7px] pr-[6px] pb-[6px] pl-[6px]">
          <Sidebar />
          <Workspace />
          <button
            type="button"
            aria-label="展开面板"
            className="absolute top-1/2 right-0 flex h-[68px] w-[5px] -translate-y-[58px] items-center justify-center rounded-l bg-[#dbe8f4]"
          >
            <svg viewBox="0 0 4 8" className="h-2 w-1" aria-hidden="true">
              <path d="M4 0v8L0 4z" fill="#3f70a3" />
            </svg>
          </button>
        </div>
        <StatusBar />
      </div>
      <Taskbar />
    </div>
  );
}
